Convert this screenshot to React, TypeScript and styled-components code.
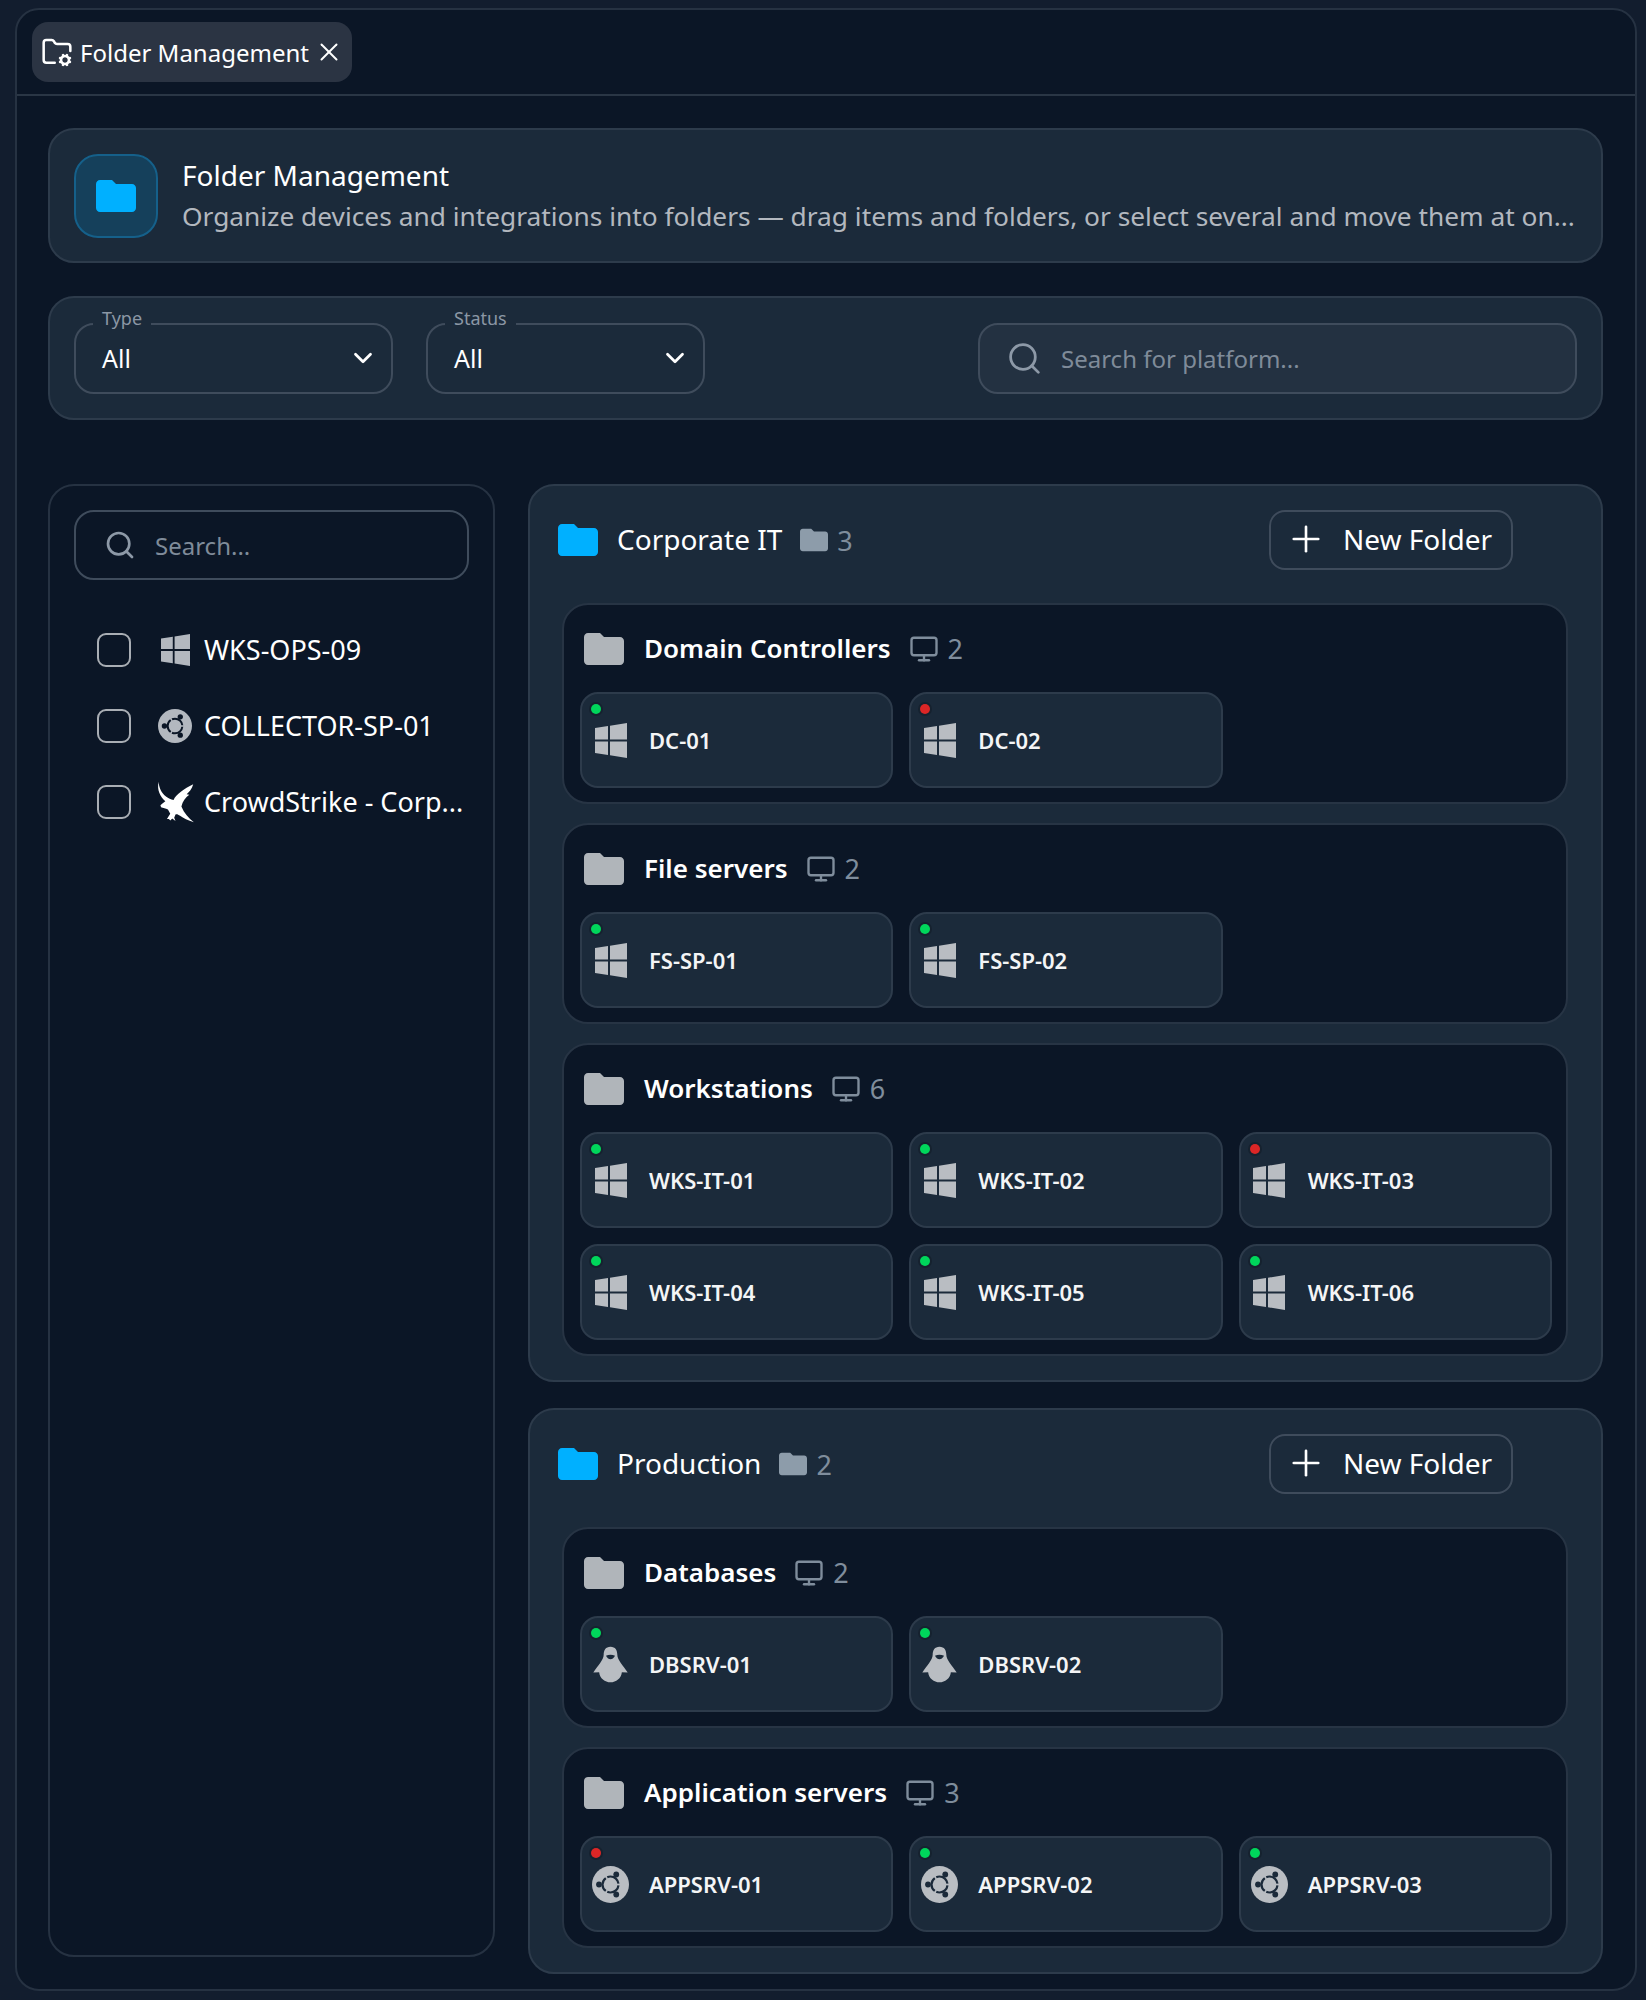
import React from "react";
import styled, { createGlobalStyle } from "styled-components";
import { ChevronDown, FolderCog, Monitor, Plus, Search, X } from "lucide-react";

const GlobalStyle = createGlobalStyle`
  html, body {
    margin: 0;
    background: #121d2e;
    color: #fff;
    font-family: "Noto Sans", "Open Sans", sans-serif;
  }
`;

const Frame = styled.div`
  box-sizing: border-box;
  width: 1622px;
  height: 1983px;
  margin: 8px 0 0 15px;
  background: #0b1626;
  border: 2px solid #263242;
  border-radius: 24px;
  overflow: hidden;
`;

const TabBar = styled.div`
  height: 86px;
  box-sizing: border-box;
  padding: 12px 0 0 15px;
  border-bottom: 2px solid #2a3645;
`;

const Tab = styled.div`
  display: inline-flex;
  align-items: center;
  box-sizing: border-box;
  width: 320px;
  height: 60px;
  padding: 0 0 0 9px;
  background: #2b3443;
  border-radius: 16px;
  font-size: 24px;
  color: #fff;
  svg { flex: none; }
`;

const TabLabel = styled.span`
  margin: 0 5px 0 7px;
  white-space: nowrap;
`;

const Content = styled.div`
  padding: 32px 32px 0 31px;
`;

const Panel = styled.div`
  box-sizing: border-box;
  background: #1b2a3a;
  border: 2px solid #2d3b4b;
  border-radius: 26px;
`;

const Hero = styled(Panel)`
  display: flex;
  align-items: center;
  gap: 24px;
  height: 135px;
  padding: 0 24px;
`;

const HeroIcon = styled.div`
  flex: none;
  display: flex;
  align-items: center;
  justify-content: center;
  box-sizing: border-box;
  width: 84px;
  height: 84px;
  background: #15405b;
  border: 2px solid #15608a;
  border-radius: 24px;
`;

const HeroText = styled.div`
  min-width: 0;
  flex: 1;
`;

const HeroTitle = styled.div`
  font-size: 28px;
  line-height: 40px;
`;

const HeroSub = styled.div`
  font-size: 26.3px;
  line-height: 42px;
  color: #b3b8bf;
  white-space: nowrap;
`;

const Filters = styled(Panel)`
  display: flex;
  align-items: center;
  height: 124px;
  margin-top: 33px;
  padding: 0 24px;
`;

const Select = styled.div<{ $width: number }>`
  position: relative;
  display: flex;
  align-items: center;
  justify-content: space-between;
  box-sizing: border-box;
  width: ${({ $width }) => $width}px;
  height: 71px;
  margin-right: 33px;
  padding: 0 13px 0 26px;
  border: 2px solid #3f4c5c;
  border-radius: 20px;
  font-size: 25px;
`;

const SelectLabel = styled.span`
  position: absolute;
  top: -19px;
  left: 17px;
  padding: 0 9px;
  background: #1b2a3a;
  color: #8b97a5;
  font-size: 18px;
  line-height: 24px;
`;

const SearchBox = styled.div<{ $sidebar?: boolean }>`
  display: flex;
  align-items: center;
  gap: ${({ $sidebar }) => ($sidebar ? "19px" : "18px")};
  box-sizing: border-box;
  height: ${({ $sidebar }) => ($sidebar ? "70px" : "71px")};
  padding-left: ${({ $sidebar }) => ($sidebar ? "28px" : "26px")};
  background: ${({ $sidebar }) => ($sidebar ? "transparent" : "#233141")};
  border: 2px solid #3f4c5c;
  border-radius: 20px;
  color: #7f8b99;
  font-size: 24px;
  margin-left: ${({ $sidebar }) => ($sidebar ? "0" : "auto")};
  width: ${({ $sidebar }) => ($sidebar ? "auto" : "599px")};
  svg { flex: none; color: #8d99a7; }
`;

const Columns = styled.div`
  display: flex;
  gap: 33px;
  margin-top: 64px;
`;

const Sidebar = styled.aside`
  box-sizing: border-box;
  flex: none;
  width: 447px;
  height: 1473px;
  padding: 24px;
  border: 2px solid #263242;
  border-radius: 26px;
`;

const PoolList = styled.div`
  display: flex;
  flex-direction: column;
  gap: 34px;
  margin-top: 49px;
  padding-left: 23px;
`;

const PoolItem = styled.div`
  display: flex;
  align-items: center;
  height: 42px;
  font-size: 27px;
  white-space: nowrap;
`;

const PoolLabel = styled.span`
  margin-bottom: 2px;
`;

const Checkbox = styled.span`
  flex: none;
  box-sizing: border-box;
  width: 34px;
  height: 34px;
  margin-right: 24px;
  border: 2px solid #a9aeb4;
  border-radius: 9px;
`;

const PoolIcon = styled.span`
  flex: none;
  display: flex;
  align-items: center;
  justify-content: center;
  width: 40px;
  margin-right: 9px;
  color: #b3b8bf;
`;

const Tree = styled.div`
  flex: 1;
  min-width: 0;
  display: flex;
  flex-direction: column;
  gap: 26px;
`;

const Root = styled(Panel)`
  padding: 24px 33px 24px 32px;
`;

const RootHeader = styled.div`
  display: flex;
  align-items: center;
  height: 60px;
  margin: 0 0 33px -4px;
`;

const RootTitle = styled.span`
  margin: 0 18px 2px 19px;
  font-size: 28px;
`;

const Count = styled.span`
  display: inline-flex;
  align-items: center;
  gap: 9px;
  color: #7f8d9c;
  font-size: 27px;
`;

const NewFolder = styled.div`
  display: flex;
  align-items: center;
  gap: 16px;
  box-sizing: border-box;
  width: 244px;
  height: 60px;
  margin-left: auto;
  margin-right: 55px;
  padding: 0 0 2px 14px;
  border: 2px solid #3f4c5c;
  border-radius: 16px;
  font-size: 28px;
  white-space: nowrap;
`;

const Groups = styled.div`
  display: flex;
  flex-direction: column;
  gap: 19px;
`;

const Group = styled.div`
  box-sizing: border-box;
  padding: 0 14px 14px 16px;
  background: #0b1626;
  border: 2px solid #273444;
  border-radius: 26px;
`;

const GroupHeader = styled.div`
  display: flex;
  align-items: center;
  height: 87px;
  padding-left: 4px;
`;

const GroupTitle = styled.span`
  margin: 0 18px 2px 20px;
  font-size: 26px;
  font-weight: 600;
`;

const DeviceGrid = styled.div`
  display: grid;
  grid-template-columns: repeat(3, 1fr);
  gap: 16px;
`;

const Device = styled.div`
  position: relative;
  display: flex;
  align-items: center;
  gap: 20px;
  box-sizing: border-box;
  height: 96px;
  padding: 0 0 0 10px;
  background: #1b2a3a;
  border: 2px solid #2d3b4b;
  border-radius: 18px;
  font-size: 22px;
  font-weight: 600;
  color: #f4f5f6;
`;

const DeviceIcon = styled.span`
  flex: none;
  display: flex;
  align-items: center;
  justify-content: center;
  width: 37px;
  height: 37px;
  color: #b9bdc2;
`;

const StatusDot = styled.span<{ $down?: boolean }>`
  position: absolute;
  top: 10px;
  left: 9px;
  width: 10px;
  height: 10px;
  border-radius: 50%;
  background: ${({ $down }) => ($down ? "#dc2626" : "#00d65b")};
  box-shadow: 0 0 0 2px #16222f;
`;

type Os = "windows" | "linux" | "ubuntu";

const panelInk = "#1b2a3a";
const pageInk = "#0b1626";

const FolderGlyph = ({ size, color }: { size: number; color: string }) => (
  <svg width={size} height={size} viewBox="2 2 20 20" fill={color} style={{ flex: "none" }}>
    <path d="M10 4H4c-1.1 0-1.99.9-1.99 2L2 18c0 1.1.9 2 2 2h16c1.1 0 2-.9 2-2V8c0-1.1-.9-2-2-2h-8l-2-2z" />
  </svg>
);

const WindowsGlyph = ({ width, height }: { width: number; height: number }) => (
  <svg width={width} height={height} viewBox="0 0 32 35" fill="currentColor" preserveAspectRatio="none">
    <path d="M0 5 13 3V16.500H0z" />
    <path d="M15 2.700 32 0V16.500H15z" />
    <path d="M0 18.500H13V32L0 30z" />
    <path d="M15 18.500H32V35L15 32.300z" />
  </svg>
);

const UbuntuGlyph = ({ size, ink }: { size: number; ink: string }) => (
  <svg width={size} height={size} viewBox="0 0 37 37">
    <circle cx="18.500" cy="18.500" r="18.500" fill="currentColor" />
    <circle
      cx="18.500"
      cy="18.500"
      r="8"
      fill="none"
      stroke={ink}
      strokeWidth="2.200"
      pathLength={360}
      strokeDasharray="108 12"
      strokeDashoffset="-6"
    />
    <circle cx="24.250" cy="8.500" r="2.900" fill={ink} />
    <circle cx="24.250" cy="28.500" r="2.900" fill={ink} />
    <circle cx="7" cy="18.500" r="2.900" fill={ink} />
  </svg>
);

const Penguin = ({ size }: { size: number }) => (
  <svg width={size} height={size} viewBox="20 15 110 114">
    <path
      fill="currentColor"
      d="M75 17C60 17 54 28 54 42 54 58 36 75 22 97L40 96C42 115 58 127 75 127 92 127 108 115 110 96L128 97C114 75 96 58 96 42 96 28 90 17 75 17Z"
    />
    <path fill={panelInk} d="M61 45C70 41 80 41 89 45 85 52 80 56 75 56 70 56 65 52 61 45Z" />
  </svg>
);

const Falcon = () => (
  <svg width="39" height="42" viewBox="20 18 116 128" fill="#fff">
    <path d="M27 20C27 36 34 54 50 66 56 71 64 74 72 76 80 58 104 42 132 28 128 42 120 52 112 58L120 60C108 68 100 80 96 96 104 116 118 132 134 144 116 138 102 132 92 124 86 120 82 118 78 120L74 130 78 140 68 132 62 138 58 134 52 134 58 124 62 118 55 105C48 101 40 100 34 98L32 92C36 88 42 84 47 80 32 66 20 44 27 20Z" />
  </svg>
);

const OsIcon = ({ os }: { os: Os }) => {
  if (os === "windows") return <WindowsGlyph width={32} height={35} />;
  if (os === "ubuntu") return <UbuntuGlyph size={37} ink={panelInk} />;
  return <Penguin size={37} />;
};

const corporate = [
  {
    name: "Domain Controllers",
    devices: [
      { name: "DC-01", os: "windows" },
      { name: "DC-02", os: "windows", down: true },
    ],
  },
  {
    name: "File servers",
    devices: [
      { name: "FS-SP-01", os: "windows" },
      { name: "FS-SP-02", os: "windows" },
    ],
  },
  {
    name: "Workstations",
    devices: [
      { name: "WKS-IT-01", os: "windows" },
      { name: "WKS-IT-02", os: "windows" },
      { name: "WKS-IT-03", os: "windows", down: true },
      { name: "WKS-IT-04", os: "windows" },
      { name: "WKS-IT-05", os: "windows" },
      { name: "WKS-IT-06", os: "windows" },
    ],
  },
];

const production = [
  {
    name: "Databases",
    devices: [
      { name: "DBSRV-01", os: "linux" },
      { name: "DBSRV-02", os: "linux" },
    ],
  },
  {
    name: "Application servers",
    devices: [
      { name: "APPSRV-01", os: "ubuntu", down: true },
      { name: "APPSRV-02", os: "ubuntu" },
      { name: "APPSRV-03", os: "ubuntu" },
    ],
  },
];

type GroupData = { name: string; devices: { name: string; os: string; down?: boolean }[] };

const RootFolder = ({ title, groups }: { title: string; groups: GroupData[] }) => (
  <Root>
    <RootHeader>
      <FolderGlyph size={40} color="#00b0ff" />
      <RootTitle>{title}</RootTitle>
      <Count>
        <FolderGlyph size={28} color="#8d9caa" />
        {groups.length}
      </Count>
      <NewFolder>
        <Plus size={42} strokeWidth={1.5} />
        New Folder
      </NewFolder>
    </RootHeader>
    <Groups>
      {groups.map((group) => (
        <Group key={group.name}>
          <GroupHeader>
            <FolderGlyph size={40} color="#b0b5ba" />
            <GroupTitle>{group.name}</GroupTitle>
            <Count>
              <Monitor size={30} strokeWidth={1.9} />
              {group.devices.length}
            </Count>
          </GroupHeader>
          <DeviceGrid>
            {group.devices.map((device) => (
              <Device key={device.name}>
                <StatusDot $down={device.down} />
                <DeviceIcon>
                  <OsIcon os={device.os as Os} />
                </DeviceIcon>
                {device.name}
              </Device>
            ))}
          </DeviceGrid>
        </Group>
      ))}
    </Groups>
  </Root>
);

const App = () => (
  <>
    <GlobalStyle />
    <Frame>
      <TabBar>
        <Tab>
          <FolderCog size={32} strokeWidth={1.9} />
          <TabLabel>Folder Management</TabLabel>
          <X size={30} strokeWidth={1.6} />
        </Tab>
      </TabBar>
      <Content>
        <Hero>
          <HeroIcon>
            <FolderGlyph size={40} color="#00b0ff" />
          </HeroIcon>
          <HeroText>
            <HeroTitle>Folder Management</HeroTitle>
            <HeroSub>
              Organize devices and integrations into folders — drag items and folders, or select several and move them at on...
            </HeroSub>
          </HeroText>
        </Hero>
        <Filters>
          <Select $width={319}>
            <SelectLabel>Type</SelectLabel>
            All
            <ChevronDown size={30} strokeWidth={2.2} />
          </Select>
          <Select $width={279}>
            <SelectLabel>Status</SelectLabel>
            All
            <ChevronDown size={30} strokeWidth={2.2} />
          </Select>
          <SearchBox>
            <Search size={37} strokeWidth={1.8} />
            Search for platform...
          </SearchBox>
        </Filters>
        <Columns>
          <Sidebar>
            <SearchBox $sidebar>
              <Search size={32} strokeWidth={2} />
              Search...
            </SearchBox>
            <PoolList>
              <PoolItem>
                <Checkbox />
                <PoolIcon>
                  <WindowsGlyph width={29} height={32} />
                </PoolIcon>
                <PoolLabel>WKS-OPS-09</PoolLabel>
              </PoolItem>
              <PoolItem>
                <Checkbox />
                <PoolIcon>
                  <UbuntuGlyph size={34} ink={pageInk} />
                </PoolIcon>
                <PoolLabel>COLLECTOR-SP-01</PoolLabel>
              </PoolItem>
              <PoolItem>
                <Checkbox />
                <PoolIcon>
                  <Falcon />
                </PoolIcon>
                <PoolLabel>CrowdStrike - Corp...</PoolLabel>
              </PoolItem>
            </PoolList>
          </Sidebar>
          <Tree>
            <RootFolder title="Corporate IT" groups={corporate} />
            <RootFolder title="Production" groups={production} />
          </Tree>
        </Columns>
      </Content>
    </Frame>
  </>
);

export default App;
